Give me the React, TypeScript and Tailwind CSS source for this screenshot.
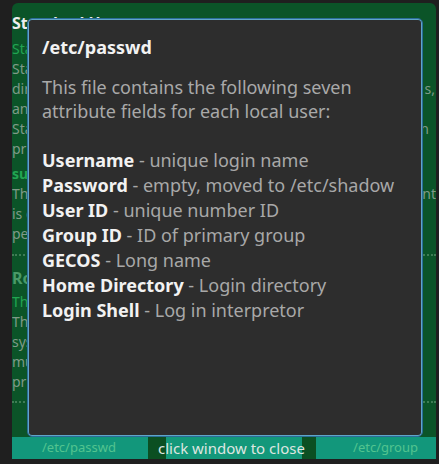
import React from 'react'

const fields = [
  { label: 'Username', desc: 'unique login name' },
  { label: 'Password', desc: 'empty, moved to /etc/shadow' },
  { label: 'User ID', desc: 'unique number ID' },
  { label: 'Group ID', desc: 'ID of primary group' },
  { label: 'GECOS', desc: 'Long name' },
  { label: 'Home Directory', desc: 'Login directory' },
  { label: 'Login Shell', desc: 'Log in interpretor' },
]

function Line({
  children,
  tail,
  tailClass = '',
  className = '',
}: {
  children: React.ReactNode
  tail?: string
  tailClass?: string
  className?: string
}) {
  return (
    <div className={`h-[20px] leading-[20px] whitespace-nowrap flex justify-between overflow-hidden ${className}`}>
      <span>{children}</span>
      {tail && <span className={tailClass}>{tail}</span>}
    </div>
  )
}

function Dots() {
  return <div className="h-0 border-t-2 border-dotted border-[#3f7d55] w-full" />
}

export default function App() {
  return (
    <div className="w-[439px] h-[464px] bg-[#1f1f1f] relative overflow-hidden font-['Noto_Sans',sans-serif]">
      <div className="pl-[12px] pt-[3px] pr-[3px]">
        <div className="h-[456px] bg-[#0b5428] rounded-t-[6px] flex flex-col overflow-hidden">
          {/* page behind the popup */}
          <div className="flex-1 overflow-hidden pt-[10px] text-[14px] text-[#7f9a88]">
            <Line className="text-[16px] font-bold text-[#eeeeee]">Standard Users</Line>
            <Line className="mt-[6px] text-[#22a552]">Standard users are regular accounts</Line>
            <Line>Standard users have their own home</Line>
            <Line tail="s," tailClass="pr-[1px]">directories and are able to own files, programs</Line>
            <Line>and cannot change system settings</Line>
            <Line tail="n" tailClass="pr-[7px]">Standard users log in and run the programs</Line>
            <Line>privileges are limited by the sudoers file</Line>
            <Line className="mt-[5px] font-bold text-[#22a552]">sudo</Line>
            <Line tail="nt">The sudo command lets a standard user run</Line>
            <Line>is granted to a user in /etc/sudoers</Line>
            <Line>permissions for administration</Line>
            <div className="mt-[10px] mb-[12px]">
              <Dots />
            </div>
            <Line className="text-[16px] font-bold text-[#4a9a68]">Root User</Line>
            <Line className="mt-[4px] text-[#22a552]">The superuser account</Line>
            <Line>The root user has full control over the</Line>
            <Line>system and every file on it</Line>
            <Line>must be used with care</Line>
            <Line>privileged commands only</Line>
            <div className="mt-[9px]">
              <Dots />
            </div>
          </div>
          {/* bottom navigation */}
          <div className="h-[22px] bg-[#12977b] flex items-center text-[13px]">
            <div className="w-[136px] pl-[30px] text-[#52c48f]">/etc/passwd</div>
            <div className="relative w-[168px] h-full flex">
              <div className="w-[18px] bg-[#0b4f22]" />
              <div className="flex-1 bg-[#13987a]" />
              <div className="w-[14px] bg-[#0b4f22]" />
              <div className="absolute left-[10px] top-0 h-full flex items-center text-[15px] text-[#dfe6e0]">
                click window to close
              </div>
            </div>
            <div className="flex-1 text-right pr-[18px] text-[#52c48f]">/etc/group</div>
          </div>
        </div>
      </div>

      {/* popup */}
      <div className="absolute left-[27px] top-[18px] w-[396px] h-[419px] rounded-[5px] bg-[#2d2d2d] border border-[#2b6c98] shadow-[inset_0_0_0_1px_#5fa6c8] pl-[14px] pt-[16px]">
        <div className="text-[18px] font-bold leading-[24px] text-[#f2f2f2]">/etc/passwd</div>
        <p className="mt-[16px] text-[18px] leading-[24px] text-[#a9a9a9]">
          This file contains the following seven
          <br />
          attribute fields for each local user:
        </p>
        <ul className="mt-[25px] text-[18px] leading-[25px]">
          {fields.map((f) => (
            <li key={f.label} className="whitespace-nowrap">
              <span className="font-bold text-[#f2f2f2]">{f.label}</span>
              <span className="text-[#a8a8a8]"> - {f.desc}</span>
            </li>
          ))}
        </ul>
      </div>
    </div>
  )
}
